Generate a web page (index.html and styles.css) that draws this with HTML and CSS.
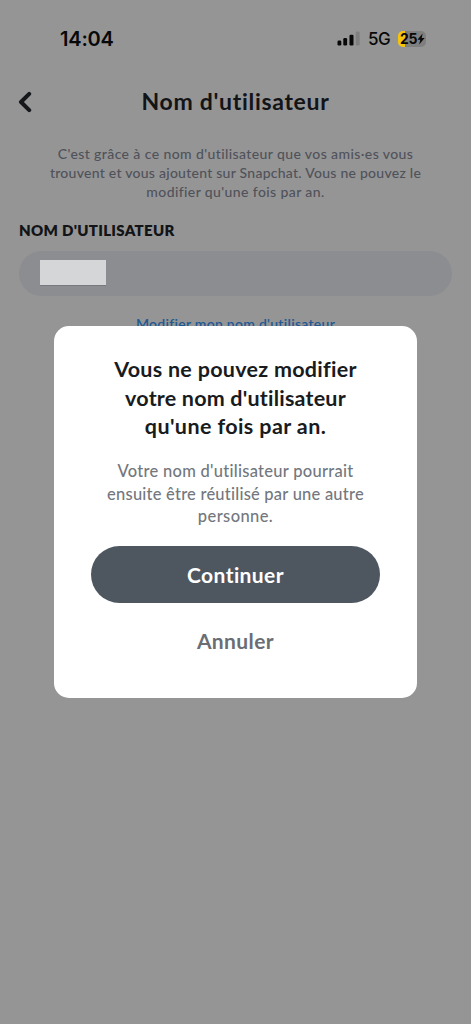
FILE: index.html
```html
<!DOCTYPE html>
<html lang="fr">
<head>
<meta charset="utf-8">
<title>Nom d'utilisateur</title>
<link rel="stylesheet" href="styles.css">
</head>
<body>
<div class="screen">
  <div class="status">
    <span class="time">14:04</span>
    <div class="indicators">
      <svg class="signal" width="24" height="15" viewBox="0 0 24 15">
        <rect x="0.5" y="9.5" width="3.8" height="5" rx="1.2" fill="#080808"/>
        <rect x="6.3" y="7" width="3.8" height="7.5" rx="1.2" fill="#080808"/>
        <rect x="12.5" y="3.7" width="4" height="10.8" rx="1.2" fill="#080808"/>
        <rect x="18.8" y="0.5" width="3.8" height="14" rx="1.2" fill="#7f7f7f"/>
      </svg>
      <span class="network">5G</span>
      <div class="battery"><span>25</span><svg width="8" height="12" viewBox="0 0 8 12"><path d="M5.6 0.5 0.5 6.8h2.8L2.2 11.5 7.6 5H4.7z" fill="#080808"/></svg></div>
    </div>
  </div>
  <header class="header">
    <svg class="back" width="16" height="22" viewBox="0 0 16 22"><path d="M12.2 2.8 4 11l8.2 8.2" fill="none" stroke="#15171a" stroke-width="4" stroke-linecap="round" stroke-linejoin="round"/></svg>
    <h1>Nom d'utilisateur</h1>
  </header>
  <p class="intro"><span class="i1">C'est grâce à ce nom d'utilisateur que vos amis·es vous</span><br><span class="i2">trouvent et vous ajoutent sur Snapchat. Vous ne pouvez le</span><br><span class="i3">modifier qu'une fois par an.</span></p>
  <div class="label"><span>NOM D'UTILISATEUR</span></div>
  <div class="field"><div class="value"></div></div>
  <a class="change"><span>Modifier mon nom d'utilisateur</span></a>
  <div class="modal">
    <h2><span class="t1">Vous ne pouvez modifier</span><br><span class="t2">votre nom d'utilisateur</span><br><span class="t3">qu'une fois par an.</span></h2>
    <p><span class="b1">Votre nom d'utilisateur pourrait</span><br><span class="b2">ensuite être réutilisé par une autre</span><br><span class="b3">personne.</span></p>
    <button class="continue">Continuer</button>
    <button class="cancel">Annuler</button>
  </div>
</div>
</body>
</html>
```
FILE: styles.css
```css
* { box-sizing: border-box; }
body { margin: 0; background: #959595; font-family: Lato, "Noto Sans", sans-serif; color: #121417; }
.screen { position: relative; width: 471px; height: 1024px; overflow: hidden; background: #959595; white-space: nowrap; }
h1, h2, p { margin: 0; }
.status { display: flex; justify-content: space-between; height: 76px; padding: 26px 45px 0 60px; font-family: Inter, sans-serif; color: #080808; }
.time { font-size: 20px; font-weight: 600; line-height: 26px; letter-spacing: -0.2px; }
.indicators { display: flex; height: 25px; align-items: center; }
.signal { margin-right: 7px; }
.network { font-size: 17px; font-weight: 500; width: 23px; letter-spacing: -0.6px; margin-right: 7px; }
.battery { display: flex; align-items: center; width: 28px; height: 16px; padding-left: 2px; border-radius: 5px; background: linear-gradient(90deg, #f5c50c 0 7px, #7f7f7f 7px); font-size: 14px; font-weight: 700; letter-spacing: -0.4px; }
.header { display: flex; align-items: center; height: 50px; padding-left: 17px; }
.header h1 { flex: 1; padding-right: 33px; text-align: center; font-size: 23px; line-height: 28px; font-weight: 700; letter-spacing: 0.7px; }
.back { position: relative; top: 1px; }
.intro { padding-top: 18px; text-align: center; font-size: 14px; line-height: 19px; font-weight: 500; letter-spacing: 0.4px; color: #50525a; }
.i2 { letter-spacing: 0.26px; }
.label { padding: 19px 0 0 19px; height: 50px; font-size: 15px; line-height: 20px; font-weight: 800; letter-spacing: 0.3px; }
.field { display: flex; align-items: center; width: 433px; height: 45px; margin: 0 0 0 19px; padding: 0 0 2px 21px; border-radius: 23px; background: #8c8d91; }
.value { width: 66px; height: 26px; background: #d5d6d8; border-bottom: 1px solid #77797c; }
.change { display: block; margin-top: 18px; text-align: center; font-size: 14px; line-height: 20px; font-weight: 600; letter-spacing: 0.27px; color: #1f5993; }
.modal { position: absolute; left: 54px; top: 326px; width: 363px; height: 372px; padding: 29px 37px; border-radius: 15px; background: #fff; text-align: center; }
.modal h2 { font-size: 21.5px; line-height: 28.7px; font-weight: 700; letter-spacing: 0.4px; color: #191b1d; }
.t1 { letter-spacing: 0.28px; }
.t2 { letter-spacing: 0.2px; }
.modal p { padding-top: 19px; font-size: 16.5px; line-height: 22.6px; font-weight: 500; letter-spacing: 0.4px; color: #73777e; }
.b1 { letter-spacing: 0.27px; }
.b2 { letter-spacing: 0.22px; }
.modal button { display: block; width: 289px; height: 57px; margin: 0; padding: 0; border: 0; background: none; font: 700 21px/56px Lato, sans-serif; letter-spacing: 0.4px; }
.modal .continue { margin-top: 18.5px; border-radius: 29px; background: #4e5660; color: #fff; }
.modal .cancel { margin-top: 9px; color: #6a6e74; }
```
